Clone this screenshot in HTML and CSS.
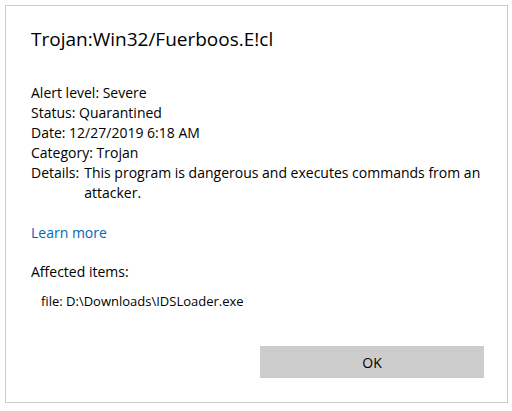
FILE: index.html
```html
<!DOCTYPE html>
<html>
<head>
<meta charset="utf-8">
<link rel="stylesheet" href="styles.css">
</head>
<body>
<div class="dialog">
  <h1 class="title">Trojan:Win32/Fuerboos.E!cl</h1>
  <div class="info">
    <div class="row">Alert level: Severe</div>
    <div class="row">Status: Quarantined</div>
    <div class="row">Date: 12/27/2019 6:18 AM</div>
    <div class="row">Category: Trojan</div>
    <div class="row details"><span class="label">Details:</span><span class="value">This program is dangerous and executes commands from an attacker.</span></div>
  </div>
  <a class="learn" href="#">Learn more</a>
  <div class="affected">Affected items:</div>
  <div class="file">file: D:\Downloads\IDSLoader.exe</div>
  <div class="actions"><button class="ok">OK</button></div>
</div>
</body>
</html>
```
FILE: styles.css
```css
html, body {
  margin: 0;
  padding: 0;
  background: #ffffff;
}
body {
  font-family: "Open Sans", "Noto Sans", sans-serif;
  color: #000000;
}
.dialog {
  margin: 5px;
  width: 503px;
  height: 398px;
  box-sizing: border-box;
  border: 1px solid #cccccc;
  padding: 20px 23px 0 25px;
  display: flex;
  flex-direction: column;
}
.title {
  margin: 0;
  font-size: 19px;
  font-weight: 400;
  line-height: 27px;
}
.info {
  margin-top: 30px;
  font-size: 14px;
  line-height: 20px;
}
.details {
  display: flex;
  gap: 5px;
}
.details .label {
  flex: none;
}
.learn {
  margin-top: 20px;
  align-self: flex-start;
  font-size: 14px;
  line-height: 20px;
  color: #0067c0;
  text-decoration: none;
}
.affected {
  margin-top: 19px;
  font-size: 14px;
  line-height: 20px;
}
.file {
  margin-top: 9px;
  padding-left: 10px;
  font-size: 13px;
  line-height: 20px;
}
.actions {
  margin-top: auto;
  margin-bottom: 24px;
  display: flex;
  justify-content: flex-end;
}
.ok {
  width: 224px;
  height: 32px;
  border: none;
  background: #cccccc;
  font-family: inherit;
  font-size: 14px;
  color: #000000;
  padding: 0;
}
```
